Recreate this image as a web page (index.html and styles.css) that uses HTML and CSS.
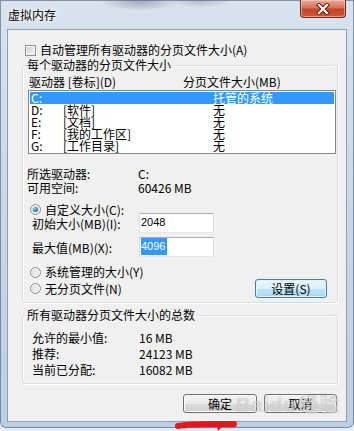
FILE: index.html
```html
<!DOCTYPE html>
<html lang="zh-CN">
<head>
    <meta charset="UTF-8" />
    <title>虚拟内存</title>
    <link rel="stylesheet" href="styles.css">
</head>
<body>
    <div class="window">
        <!-- 标题栏 -->
        <div class="titlebar">
            <span class="title">虚拟内存</span>
            <button class="close" aria-label="关闭">
                <svg width="14" height="12" viewBox="0 0 14 12">
                    <path d="M3 2 L11 10 M11 2 L3 10" stroke="#5a1508" stroke-width="4" stroke-linecap="square" fill="none"/>
                    <path d="M3 2 L11 10 M11 2 L3 10" stroke="#fff" stroke-width="2.2" stroke-linecap="square" fill="none"/>
                </svg>
            </button>
        </div>

        <div class="client">
            <label class="check-row"><span class="checkbox"></span>自动管理所有驱动器的分页文件大小(A)</label>

            <fieldset class="group drives">
                <legend>每个驱动器的分页文件大小</legend>
                <div class="list-head">
                    <span class="col-drive">驱动器 [卷标](D)</span>
                    <span>分页文件大小(MB)</span>
                </div>
                <ul class="drive-list">
                    <li class="selected"><span>C:</span><span></span><span>托管的系统</span></li>
                    <li><span>D:</span><span>[软件]</span><span>无</span></li>
                    <li><span>E:</span><span>[文档]</span><span>无</span></li>
                    <li><span>F:</span><span>[我的工作区]</span><span>无</span></li>
                    <li><span>G:</span><span>[工作目录]</span><span>无</span></li>
                </ul>

                <div class="info-row first"><span class="info-label">所选驱动器:</span><span>C:</span></div>
                <div class="info-row"><span class="info-label">可用空间:</span><span>60426 MB</span></div>

                <div class="radio-row custom"><span class="radio checked"></span>自定义大小(C):</div>
                <div class="field-row first"><span class="field-label">初始大小(MB)(I):</span><span class="textbox">2048</span></div>
                <div class="field-row"><span class="field-label">最大值(MB)(X):</span><span class="textbox"><span class="sel">4096</span></span></div>

                <div class="radio-row sys"><span class="radio"></span>系统管理的大小(Y)</div>
                <div class="radio-row none"><span class="radio"></span>无分页文件(N)<button class="btn btn-default set">设置(S)</button></div>
            </fieldset>

            <fieldset class="group totals">
                <legend>所有驱动器分页文件大小的总数</legend>
                <div class="total-row first"><span class="field-label">允许的最小值:</span><span>16 MB</span></div>
                <div class="total-row"><span class="field-label">推荐:</span><span>24123 MB</span></div>
                <div class="total-row"><span class="field-label">当前已分配:</span><span>16082 MB</span></div>
            </fieldset>

            <div class="actions">
                <button class="btn ok">确定</button>
                <button class="btn cancel">取消</button>
            </div>
        </div>
    </div>

    <!-- 水印和红色标记 -->
    <div class="watermark">Bai<span class="paw">du</span>经验</div>
    <svg class="mark" width="70" height="14" viewBox="0 0 70 14">
        <path d="M6 8 C 20 5, 40 6, 62 6" stroke="#e3161b" stroke-width="6" stroke-linecap="round" fill="none"/>
        <path d="M44 4 L52 7 L46 13 Z" fill="#e3161b"/>
    </svg>
</body>
</html>
```

FILE: styles.css
```css
/* 기본 */
html, body {
    margin: 0;
    padding: 0;
}
body {
    width: 354px;
    height: 431px;
    overflow: hidden;
    position: relative;
    background: #e6ecf2;
    font: 12px "Noto Sans CJK SC", "Liberation Sans", sans-serif;
    color: #000;
}

/* 窗口框架 */
.window {
    height: 428px;
    box-sizing: border-box;
    padding: 0 7px;
    background:
        radial-gradient(ellipse 40px 9px at 140px 2px, rgba(70, 80, 95, 0.35), transparent),
        radial-gradient(ellipse 30px 7px at 200px 1px, rgba(70, 80, 95, 0.25), transparent),
        linear-gradient(#d9e3ee, #cbd9e8 40%, #bccfe3);
    box-shadow: inset 0 0 0 1px rgba(60, 80, 110, 0.55);
    border-radius: 0 0 6px 6px;
}
.titlebar {
    height: 29px;
    display: flex;
    justify-content: space-between;
    align-items: flex-start;
}
.title {
    margin: 8px 0 0 1px;
    line-height: 14px;
    text-shadow: 0 0 6px #fff, 0 0 3px #fff;
}
.close {
    width: 46px;
    height: 18px;
    margin-right: 1px;
    padding: 0;
    border: 1px solid #6b2a1e;
    border-top: none;
    border-radius: 0 0 4px 4px;
    background: linear-gradient(#e9a99b, #d7715c 45%, #c3452b 55%, #d0573a);
    box-shadow: inset 0 0 0 1px rgba(255, 220, 210, 0.5);
    display: flex;
    align-items: center;
    justify-content: center;
}
.close svg { display: block; }

/* 客户区 */
.client {
    height: 393px;
    box-sizing: border-box;
    border: 1px solid #8d9fb4;
    background: #f0f0f0;
    padding: 13px 8px 0 14px;
}
.check-row {
    display: flex;
    align-items: center;
    height: 14px;
    line-height: 14px;
    padding-left: 3px;
}
.checkbox {
    width: 9px;
    height: 9px;
    margin-right: 4px;
    border: 1px solid #8e8f8f;
    background: linear-gradient(135deg, #c9cdd2, #f4f4f4);
    box-shadow: inset 0 0 0 1px #f6f6f6;
}

/* 分组框 */
.group {
    margin: 1px 0 0;
    padding: 0 0 4px;
    border: 1px solid #d5dfe5;
    border-radius: 3px;
    box-shadow: inset 1px 1px 0 #fff, 1px 1px 0 #fff;
    min-width: 0;
}
.group legend {
    margin-left: 3px;
    padding: 0 1px;
    line-height: 14px;
}
.list-head {
    display: flex;
    margin-top: 3px;
    line-height: 14px;
    padding-left: 6px;
}
.col-drive { width: 154px; }

.drive-list {
    list-style: none;
    margin: 1px 1px 0 5px;
    padding: 1px;
    border: 1px solid #828790;
    background: #fff;
}
.drive-list li {
    display: grid;
    grid-template-columns: 32px 150px 1fr;
    height: 12px;
    line-height: 12px;
    padding-left: 1px;
}
.drive-list li.selected {
    background: #3399ff;
    color: #fff;
}

.info-row {
    display: flex;
    line-height: 14px;
    padding-left: 4px;
}
.info-row.first { margin-top: 13px; }
.info-label { width: 111px; }

.radio-row {
    display: flex;
    align-items: center;
    padding-left: 7px;
    line-height: 14px;
    height: 14px;
}
.radio-row.custom { margin-top: 9px; height: 11px; }
.radio-row.sys { margin-top: 8px; }
.radio-row.none { height: 19px; }
.radio {
    width: 9px;
    height: 9px;
    margin-right: 4px;
    border: 1px solid #8e8f8f;
    border-radius: 50%;
    background: radial-gradient(circle at 60% 65%, #f4f4f4, #cfd3d8);
    box-shadow: inset 0 0 0 1px #f8f8f8;
    display: flex;
    align-items: center;
    justify-content: center;
}
.radio.checked::after {
    content: "";
    width: 5px;
    height: 5px;
    border-radius: 50%;
    background: radial-gradient(circle at 40% 35%, #8fd0ff, #1f5f9a 70%, #0d3a63);
}

.field-row {
    display: flex;
    align-items: center;
    height: 20px;
    padding-left: 9px;
    margin-top: 4px;
}
.field-row.first { margin-top: -2px; }
.field-label { width: 107px; }
.textbox {
    width: 75px;
    height: 20px;
    box-sizing: border-box;
    border: 1px solid #dbdfe6;
    border-top-color: #abadb3;
    border-bottom-color: #e3e9ef;
    background: #fff;
    padding: 0 1px;
    font: 11px "Liberation Sans", sans-serif;
    line-height: 17px;
}
.textbox .sel {
    display: inline-block;
    padding: 0 2px 0 0;
    background: #3399ff;
    color: #fff;
}

/* 按钮 */
.btn {
    height: 19px;
    padding: 0;
    font: inherit;
    line-height: 16px;
    color: #000;
    border: 1px solid #707070;
    border-radius: 3px;
    background: linear-gradient(#f2f2f2, #ebebeb 50%, #dddddd 50%, #cfcfcf);
    box-shadow: inset 0 0 0 1px #fcfcfc;
}
.btn-default {
    border-color: #3c7fb1;
    background: linear-gradient(#eaf6fd, #d9f0fc 50%, #bee6fd 50%, #a7d9f5);
    box-shadow: inset 0 0 0 1px #e0f1fb;
}
.set {
    width: 72px;
    margin: 0 10px 0 auto;
}

.total-row {
    display: flex;
    line-height: 16px;
    padding-left: 9px;
}
.total-row.first { margin-top: 8px; }
.totals { margin-top: 5px; padding-bottom: 5px; }

.actions {
    display: flex;
    justify-content: flex-end;
    gap: 7px;
    margin-top: 10px;
    padding-right: 1px;
}
.ok { width: 74px; }
.cancel { width: 73px; }

/* 水印 */
.watermark {
    position: absolute;
    left: 236px;
    top: 389px;
    font: bold 20px "Liberation Sans", "Noto Sans CJK SC", sans-serif;
    color: rgba(255, 255, 255, 0.45);
    text-shadow: 0 0 1px rgba(120, 120, 120, 0.45);
    letter-spacing: 1px;
    pointer-events: none;
}
.watermark .paw { margin-right: 2px; }
.mark {
    position: absolute;
    left: 172px;
    top: 418px;
}
```
